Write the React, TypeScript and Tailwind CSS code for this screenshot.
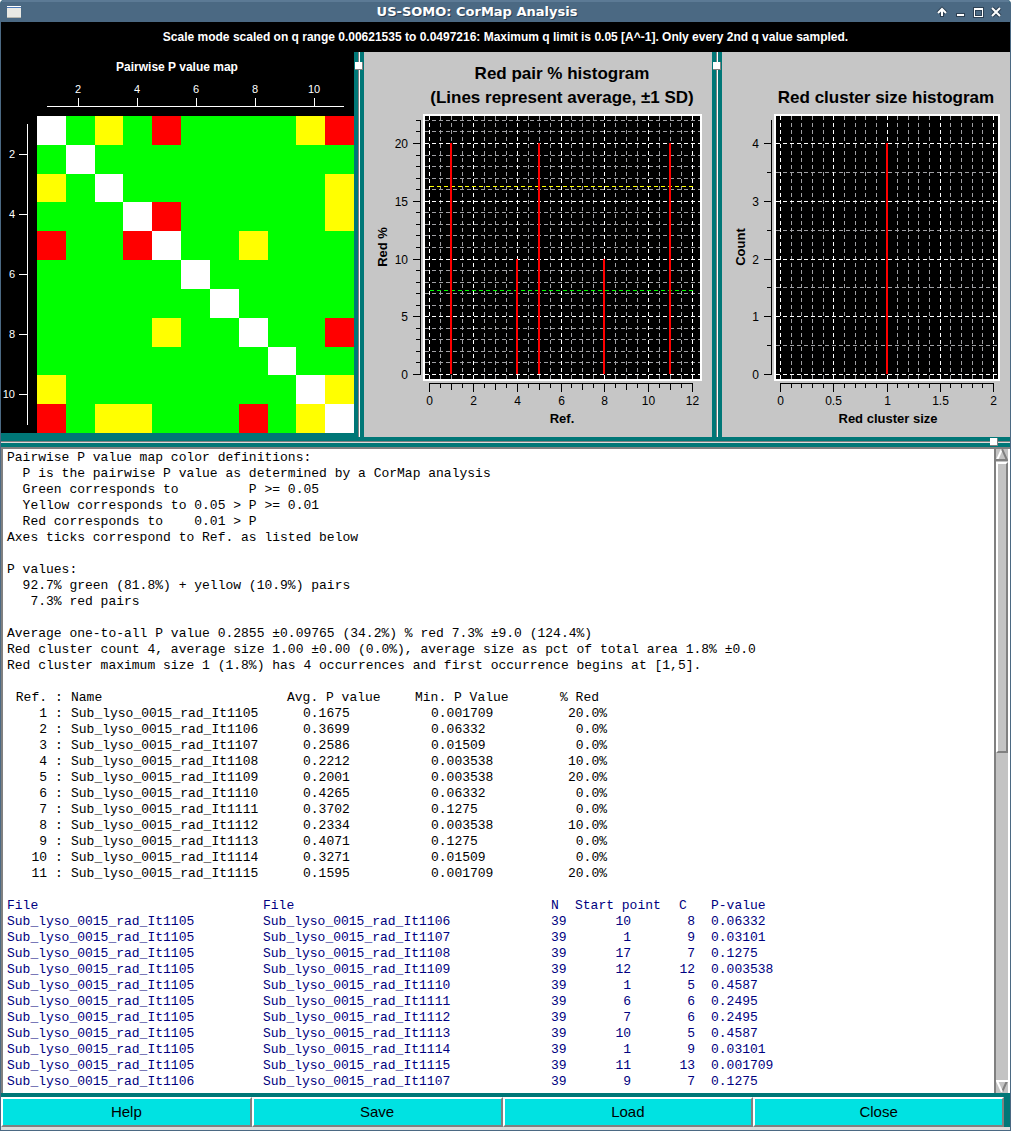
import React from "react";

const SANS = "font-['Liberation_Sans',Arial,sans-serif]";

const COLORS: Record<string, string> = { W: "#ffffff", G: "#00ff00", Y: "#ffff00", R: "#ff0000" };

const PAIR_MAP = [
  "WGYGRGGGGYR",
  "GWGGGGGGGGG",
  "YGWGGGGGGGY",
  "GGGWRGGGGGY",
  "RGGRWGGYGGG",
  "GGGGGWGGGGG",
  "GGGGGGWGGGG",
  "GGGGYGGWGGR",
  "GGGGGGGGWGG",
  "YGGGGGGGGWY",
  "RGYYGGGRGYW",
];

const DEFINITIONS = `Pairwise P value map color definitions:
  P is the pairwise P value as determined by a CorMap analysis
  Green corresponds to         P >= 0.05
  Yellow corresponds to 0.05 > P >= 0.01
  Red corresponds to    0.01 > P
Axes ticks correspond to Ref. as listed below

P values:
  92.7% green (81.8%) + yellow (10.9%) pairs
   7.3% red pairs

Average one-to-all P value 0.2855 ±0.09765 (34.2%) % red 7.3% ±9.0 (124.4%)
Red cluster count 4, average size 1.00 ±0.00 (0.0%), average size as pct of total area 1.8% ±0.0
Red cluster maximum size 1 (1.8%) has 4 occurrences and first occurrence begins at [1,5].`;

const REFS = [
  ["1", "Sub_lyso_0015_rad_It1105", "0.1675", "0.001709", "20.0%"],
  ["2", "Sub_lyso_0015_rad_It1106", "0.3699", "0.06332", "0.0%"],
  ["3", "Sub_lyso_0015_rad_It1107", "0.2586", "0.01509", "0.0%"],
  ["4", "Sub_lyso_0015_rad_It1108", "0.2212", "0.003538", "10.0%"],
  ["5", "Sub_lyso_0015_rad_It1109", "0.2001", "0.003538", "20.0%"],
  ["6", "Sub_lyso_0015_rad_It1110", "0.4265", "0.06332", "0.0%"],
  ["7", "Sub_lyso_0015_rad_It1111", "0.3702", "0.1275", "0.0%"],
  ["8", "Sub_lyso_0015_rad_It1112", "0.2334", "0.003538", "10.0%"],
  ["9", "Sub_lyso_0015_rad_It1113", "0.4071", "0.1275", "0.0%"],
  ["10", "Sub_lyso_0015_rad_It1114", "0.3271", "0.01509", "0.0%"],
  ["11", "Sub_lyso_0015_rad_It1115", "0.1595", "0.001709", "20.0%"],
];

const PAIRS = [
  ["Sub_lyso_0015_rad_It1105", "Sub_lyso_0015_rad_It1106", "39", "10", "8", "0.06332"],
  ["Sub_lyso_0015_rad_It1105", "Sub_lyso_0015_rad_It1107", "39", "1", "9", "0.03101"],
  ["Sub_lyso_0015_rad_It1105", "Sub_lyso_0015_rad_It1108", "39", "17", "7", "0.1275"],
  ["Sub_lyso_0015_rad_It1105", "Sub_lyso_0015_rad_It1109", "39", "12", "12", "0.003538"],
  ["Sub_lyso_0015_rad_It1105", "Sub_lyso_0015_rad_It1110", "39", "1", "5", "0.4587"],
  ["Sub_lyso_0015_rad_It1105", "Sub_lyso_0015_rad_It1111", "39", "6", "6", "0.2495"],
  ["Sub_lyso_0015_rad_It1105", "Sub_lyso_0015_rad_It1112", "39", "7", "6", "0.2495"],
  ["Sub_lyso_0015_rad_It1105", "Sub_lyso_0015_rad_It1113", "39", "10", "5", "0.4587"],
  ["Sub_lyso_0015_rad_It1105", "Sub_lyso_0015_rad_It1114", "39", "1", "9", "0.03101"],
  ["Sub_lyso_0015_rad_It1105", "Sub_lyso_0015_rad_It1115", "39", "11", "13", "0.001709"],
  ["Sub_lyso_0015_rad_It1106", "Sub_lyso_0015_rad_It1107", "39", "9", "7", "0.1275"],
];

function range(from: number, to: number, step: number) {
  const count = Math.round((to - from) / step);
  return Array.from({ length: count + 1 }, (_, i) => from + i * step);
}

function isMultiple(value: number, step: number) {
  return Math.abs(value / step - Math.round(value / step)) < 0.001;
}

function TitleBar() {
  const button = "flex size-[18px] items-center justify-center";
  return (
    <header className="flex h-[22px] items-center border-t-2 border-[#5c7a95] bg-[#4b6983] pl-[6px] pr-[5px]">
      <svg width="14" height="12" viewBox="0 0 14 12" className="mb-px" aria-hidden="true">
        <rect width="14" height="12" fill="#e9e9e4" />
        <rect width="14" height="1" fill="#fff" />
        <rect y="1" width="14" height="1" fill="#4a78b8" />
        <rect y="11" width="14" height="1" fill="#b8b8b0" />
      </svg>
      <h1 className="flex-1 text-center font-['DejaVu_Sans',sans-serif] text-[13px] leading-5 font-bold text-white [text-shadow:1px_1px_0_#2d4053]">
        US-SOMO: CorMap Analysis
      </h1>
      <button className={button} aria-label="Shade">
        <svg width="12" height="12" viewBox="0 0 12 12">
          <path d="M6 2v9M2 7l4-4 4 4" fill="none" stroke="#2d4053" strokeWidth="4" />
          <path d="M6 3v7M2 7l4-4 4 4" fill="none" stroke="#fff" strokeWidth="2" />
        </svg>
      </button>
      <button className={button} aria-label="Minimize">
        <svg width="12" height="12" viewBox="0 0 12 12">
          <path d="M2 7h9v4H2z" fill="#2d4053" />
          <path d="M3 8h7v2H3z" fill="#fff" />
        </svg>
      </button>
      <button className={button} aria-label="Maximize">
        <svg width="12" height="12" viewBox="0 0 12 12" shapeRendering="crispEdges">
          <path d="M1 1h11v11H1z" fill="#2d4053" />
          <path d="M2 2h9v9H2z" fill="#fff" />
          <path d="M3 4h7v6H3z" fill="#2d4053" />
          <path d="M4 5h5v4H4z" fill="#4b6983" />
        </svg>
      </button>
      <button className={button} aria-label="Close window">
        <svg width="12" height="12" viewBox="0 0 12 12">
          <path d="m2 2 8 8M10 2l-8 8" stroke="#2d4053" strokeWidth="4" />
          <path d="m2 2 8 8M10 2l-8 8" stroke="#fff" strokeWidth="2" />
        </svg>
      </button>
    </header>
  );
}

function PairMap() {
  const edge = (i: number) => Math.round((i * 317) / 11);
  const ticks = [2, 4, 6, 8, 10];
  return (
    <svg viewBox="0 0 353 385" className={`block h-auto w-full bg-black ${SANS}`} role="img" aria-label="Pairwise P value map">
      <text x="176" y="19" textAnchor="middle" fill="#fff" fontSize="12" fontWeight="bold">
        Pairwise P value map
      </text>
      <g stroke="#fff" shapeRendering="crispEdges">
        <path d="M46 54.5h297M26.5 72v301" />
        {ticks.map((t) => (
          <path key={t} d={`M${77.5 + (t - 2) * 29.5} 46v8M18 ${102.5 + (t - 2) * 30}h8`} />
        ))}
      </g>
      <g fill="#fff" fontSize="11">
        {ticks.map((t) => (
          <React.Fragment key={t}>
            <text x={77 + (t - 2) * 29.5} y="41" textAnchor="middle">{t}</text>
            <text x="14" y={106 + (t - 2) * 30} textAnchor="end">{t}</text>
          </React.Fragment>
        ))}
      </g>
      <g shapeRendering="crispEdges">
        {PAIR_MAP.flatMap((row, r) =>
          [...row].map((cell, c) => (
            <rect
              key={`${r}-${c}`}
              x={36 + edge(c)}
              y={64 + edge(r)}
              width={edge(c + 1) - edge(c)}
              height={edge(r + 1) - edge(r)}
              fill={COLORS[cell]}
            />
          ))
        )}
        <rect y="381" width="353" height="4" fill="#007777" />
      </g>
    </svg>
  );
}

type Axis = { max: number; end: number; major: number; minor: number; medium?: number };

type HistogramProps = {
  width: number;
  title: string[];
  titleX: number;
  plotLeft: number;
  plotRight: number;
  x0: number;
  x1: number;
  x: Axis;
  y: Axis;
  xLabel: string;
  yLabel: string;
  yLabelX: number;
  bars: [number, number][];
  averages?: { value: number; color: string }[];
};

function Histogram(p: HistogramProps) {
  const bottom = 322.5;
  const top = 91.5;
  const px = (v: number) => Math.floor(p.x0 + (v / p.x.max) * (p.x1 - p.x0)) + 0.5;
  const py = (v: number) => Math.floor(bottom - (v / p.y.max) * (bottom - top)) + 0.5;
  const xs = range(0, p.x.end, p.x.minor);
  const ys = range(0, p.y.end, p.y.minor);
  const axisX = p.plotLeft - 2.5;
  const gridColor = (major: boolean) => (major ? "#ffffff" : "#a0a0a4");
  const inner = { left: p.plotLeft + 2, right: p.plotRight - 2 };
  return (
    <svg
      viewBox={`0 0 ${p.width} 385`}
      className={`block h-auto w-full bg-[#c6c6c6] ${SANS}`}
      role="img"
      aria-label={p.title[0]}
    >
      {p.title.map((line, i) => (
        <text key={line} x={p.titleX} y={51 - (p.title.length - 1 - i) * 24} textAnchor="middle" fontSize="17" fontWeight="bold">
          {line}
        </text>
      ))}
      <g shapeRendering="crispEdges" fill="none">
        <rect x={p.plotLeft} y="62" width={p.plotRight - p.plotLeft} height="267" fill="#fff" />
        <rect x={inner.left} y="64" width={inner.right - inner.left} height="263" fill="#000" />
        {[false, true].map((major) => (
          <g key={String(major)} stroke={gridColor(major)} strokeDasharray="4 3">
            {xs.filter((v) => isMultiple(v, p.x.major) === major).map((v) => (
              <path key={`x${v}`} d={`M${px(v)} 64V327`} />
            ))}
            {ys.filter((v) => isMultiple(v, p.y.major) === major).map((v) => (
              <path key={`y${v}`} d={`M${inner.left} ${py(v)}H${inner.right}`} />
            ))}
          </g>
        ))}
        {p.averages?.map((a) => (
          <path key={a.color} d={`M${p.x0} ${py(a.value)}H${p.x1}`} stroke={a.color} strokeDasharray="4 3" />
        ))}
        {p.bars.map(([v, h]) => (
          <path key={v} d={`M${px(v) - 0.5} ${py(h) - 0.5}V322`} stroke="#f00" strokeWidth="2" />
        ))}
        <g stroke="#000">
          <path d={`M${p.x0 - 0.5} 331.5H${p.x1 + 0.5}M${axisX} 68V323`} />
          {xs.map((v) => {
            const long = isMultiple(v, p.x.major) ? 8 : p.x.medium && isMultiple(v, p.x.medium) ? 6 : 4;
            return <path key={v} d={`M${px(v)} 332v${long}`} />;
          })}
          {ys.map((v) => (
            <path key={v} d={`M${axisX} ${py(v)}h${isMultiple(v, p.y.major) ? -8 : -5}`} />
          ))}
        </g>
      </g>
      <g fontSize="12">
        {xs.filter((v) => isMultiple(v, p.x.major)).map((v) => (
          <text key={v} x={px(v)} y="353" textAnchor="middle">{Math.round(v * 10) / 10}</text>
        ))}
        {ys.filter((v) => isMultiple(v, p.y.major)).map((v) => (
          <text key={v} x={p.plotLeft - 15} y={py(v) + 4} textAnchor="end">{v}</text>
        ))}
      </g>
      <g fontSize="13" fontWeight="bold" textAnchor="middle">
        <text x={(p.x0 + p.x1) / 2 + 1} y="371">{p.xLabel}</text>
        <text transform={`translate(${p.yLabelX} 195) rotate(-90)`}>{p.yLabel}</text>
      </g>
    </svg>
  );
}

function Handle({ className }: { className: string }) {
  return <div className={`absolute size-2 border-r border-b border-[#808080] bg-white ${className}`} />;
}

function VerticalSplitter() {
  return (
    <div className="relative flex justify-center bg-[#007777]" role="separator" aria-orientation="vertical">
      <div className="w-0.5 border-l border-[#808080] bg-white" />
      <Handle className="top-[10px] left-px" />
    </div>
  );
}

function Report() {
  return (
    <div className="flex min-h-0 flex-1 border-t-2 border-l-2 border-[#808080] bg-white">
      <div
        id="report"
        className="h-[643px] min-w-0 flex-1 overflow-hidden pt-px pl-1 font-['Liberation_Mono','Courier_New',monospace] text-[13px] leading-4 text-black"
      >
        <pre className="font-[inherit]">{DEFINITIONS}</pre>
        <table className="mt-4 table-fixed border-collapse text-left whitespace-pre [&_td]:p-0 [&_th]:p-0 [&_th]:font-normal">
          <colgroup>
            <col className="w-[40px]" />
            <col className="w-[24px]" />
            <col className="w-[216px]" />
            <col className="w-[128px]" />
            <col className="w-[128px]" />
            <col className="w-[64px]" />
          </colgroup>
          <thead>
            <tr>
              <th><div className="text-right">Ref.</div></th>
              <th><div className="text-center">:</div></th>
              <th>Name</th>
              <th>Avg. P value</th>
              <th>Min. P Value</th>
              <th><div className="pr-2 text-right">% Red</div></th>
            </tr>
          </thead>
          <tbody>
            {REFS.map(([ref, name, avg, min, red]) => (
              <tr key={ref}>
                <td className="text-right">{ref}</td>
                <td className="text-center">:</td>
                <td>{name}</td>
                <td><span className="pl-4">{avg}</span></td>
                <td><span className="pl-4">{min}</span></td>
                <td className="text-right">{red}</td>
              </tr>
            ))}
          </tbody>
        </table>
        <table className="mt-4 table-fixed border-collapse text-left whitespace-pre text-[#000080] [&_td]:p-0 [&_th]:p-0 [&_th]:font-normal">
          <colgroup>
            <col className="w-[256px]" />
            <col className="w-[288px]" />
            <col className="w-[24px]" />
            <col className="w-[88px]" />
            <col className="w-[48px]" />
            <col className="w-[80px]" />
          </colgroup>
          <thead>
            <tr>
              <th>File</th>
              <th>File</th>
              <th>N</th>
              <th>Start point</th>
              <th><span className="pl-4">C</span></th>
              <th>P-value</th>
            </tr>
          </thead>
          <tbody>
            {PAIRS.map(([a, b, n, start, c, value]) => (
              <tr key={a + b}>
                <td>{a}</td>
                <td>{b}</td>
                <td>{n}</td>
                <td><div className="pr-8 text-right">{start}</div></td>
                <td><div className="pr-4 text-right">{c}</div></td>
                <td>{value}</td>
              </tr>
            ))}
          </tbody>
        </table>
      </div>
      <ScrollBar />
    </div>
  );
}

function ScrollBar() {
  return (
    <div className="mr-0.5 flex w-[14px] flex-col border-l-2 border-[#808080] bg-[#c3c3c3]" role="scrollbar" aria-controls="report" aria-valuenow={0}>
      <button aria-label="Scroll up" className="h-3">
        <svg viewBox="0 0 12 12" className="block size-3">
          <path d="M6 0 1 11" stroke="#fff" strokeWidth="2" />
          <path d="m6 0 5 11H0" fill="none" stroke="#808080" strokeWidth="2" />
        </svg>
      </button>
      <div className="mt-px h-[291px] border-2 border-t-white border-r-[#808080] border-b-[#808080] border-l-white" />
      <button aria-label="Scroll down" className="mt-auto mb-px h-3">
        <svg viewBox="0 0 12 12" className="block size-3">
          <path d="M11 1 6 12" stroke="#808080" strokeWidth="2" />
          <path d="M12 1H1l5 11" fill="none" stroke="#fff" strokeWidth="2" />
        </svg>
      </button>
    </div>
  );
}

export default function App() {
  return (
    <div className={`flex min-h-screen flex-col bg-white ${SANS}`}>
      <main className="flex flex-1 flex-col overflow-hidden rounded-t-[4px] border-x border-b border-[#4b6983] bg-[#007777]">
        <TitleBar />
        <p className="bg-black text-center text-[12px] leading-[30px] font-bold text-white">
          Scale mode scaled on q range 0.00621535 to 0.0497216: Maximum q limit is 0.05 [A^-1]. Only every 2nd q value sampled.
        </p>
        <section className="grid grid-cols-[353fr_10px_348fr_10px_288fr]">
          <PairMap />
          <VerticalSplitter />
          <Histogram
            width={348}
            title={["Red pair % histogram", "(Lines represent average, ±1 SD)"]}
            titleX={198}
            plotLeft={59}
            plotRight={338}
            x0={65.5}
            x1={328.5}
            x={{ max: 12, end: 12, major: 2, medium: 1, minor: 0.5 }}
            y={{ max: 20, end: 22, major: 5, minor: 1 }}
            xLabel="Ref."
            yLabel="Red %"
            yLabelX={23}
            bars={[[1, 20], [4, 10], [5, 20], [8, 10], [11, 20]]}
            averages={[{ value: 16.3, color: "#ffff00" }, { value: 7.3, color: "#00ff00" }]}
          />
          <VerticalSplitter />
          <Histogram
            width={288}
            title={["Red cluster size histogram"]}
            titleX={164}
            plotLeft={52}
            plotRight={278}
            x0={58.5}
            x1={271.5}
            x={{ max: 2, end: 2, major: 0.5, minor: 0.1 }}
            y={{ max: 4, end: 4, major: 1, minor: 0.5 }}
            xLabel="Red cluster size"
            yLabel="Count"
            yLabelX={23}
            bars={[[1, 4]]}
          />
        </section>
        <div className="relative flex h-[10px] flex-col justify-center" role="separator">
          <div className="h-0.5 border-t border-[#808080] bg-[#dcdcdc]" />
          <Handle className="top-px right-3" />
        </div>
        <Report />
        <div className="mt-1 grid grid-cols-4 pr-1.5">
          {["Help", "Save", "Load", "Close"].map((label) => (
            <button
              key={label}
              className="h-[30px] border-2 border-t-white border-r-[#808080] border-b-[#808080] border-l-white bg-[#00e2e2] text-[15px] leading-6 text-black"
            >
              {label}
            </button>
          ))}
        </div>
        <div className="h-[3px] bg-[#dcdcdc]" />
      </main>
    </div>
  );
}
